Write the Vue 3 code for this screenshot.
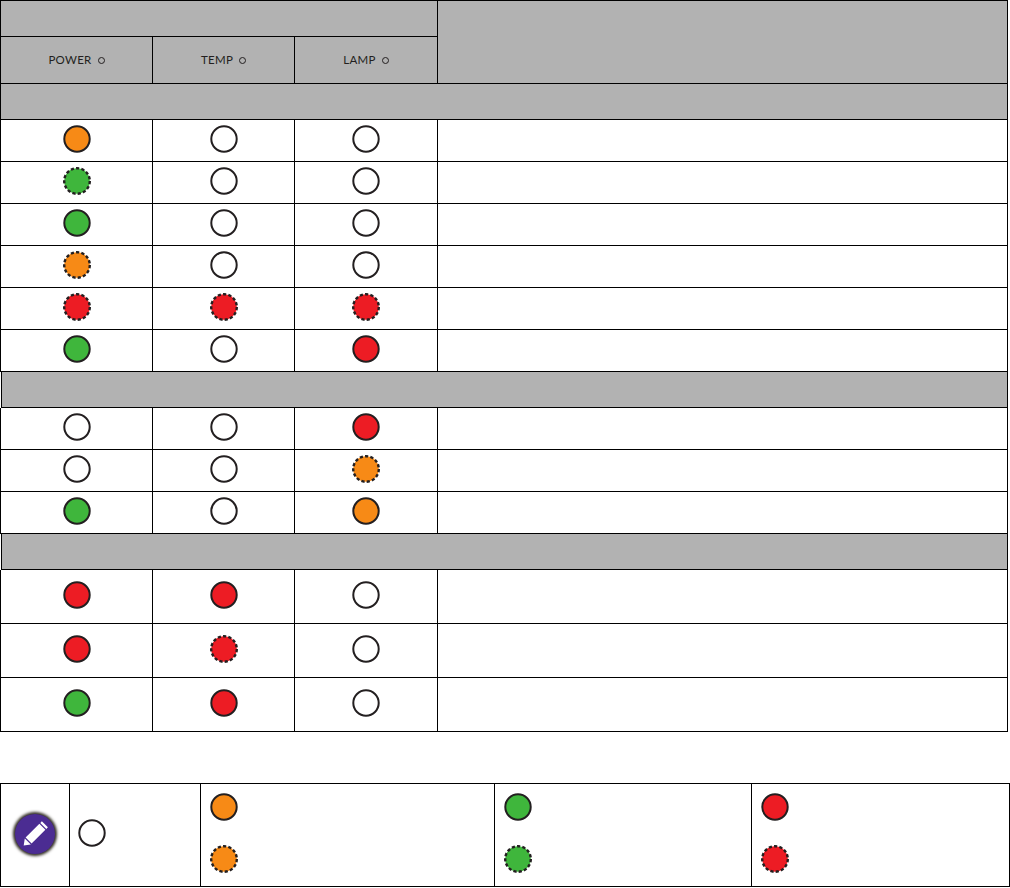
<script setup>
const O = 'o', G = 'g', R = 'r', N = 'n'
const groupA = [
  [[O], [N], [N]],
  [[G, 1], [N], [N]],
  [[G], [N], [N]],
  [[O, 1], [N], [N]],
  [[R, 1], [R, 1], [R, 1]],
  [[G], [N], [R]],
]
const groupB = [
  [[N], [N], [R]],
  [[N], [N], [O, 1]],
  [[G], [N], [O]],
]
const groupC = [
  [[R], [R], [N]],
  [[R], [R, 1], [N]],
  [[G], [R], [N]],
]
const sections = [
  { shift: false, rows: groupA, tall: false },
  { shift: true, rows: groupB, tall: false },
  { shift: true, rows: groupC, tall: true },
]
const heads = ['POWER', 'TEMP', 'LAMP']
const fills = { o: '#f78a16', g: '#3fb63c', r: '#ed1c24', n: '#ffffff' }
const legend = [
  [['o'], ['o', 1]],
  [['g'], ['g', 1]],
  [['r'], ['r', 1]],
]
</script>

<template>
  <div class="page">
    <div class="head">
      <div class="head-top"></div>
      <div class="head-desc"></div>
      <div v-for="h in heads" :key="h" class="head-cell">
        <span>{{ h }}</span><i class="dot"></i>
      </div>
    </div>

    <template v-for="(s, si) in sections" :key="si">
      <div class="section" :class="{ shift: s.shift }"></div>
      <div v-for="(row, ri) in s.rows" :key="ri" class="row" :class="{ tall: s.tall }">
        <div v-for="(led, ci) in row" :key="ci" class="cell">
          <svg class="led" width="28" height="28" viewBox="0 0 28 28">
            <template v-if="led[1]">
              <circle cx="14" cy="14" r="12.8" :fill="fills[led[0]]" />
              <circle cx="14" cy="14" r="12.8" fill="none" stroke="#231f20" stroke-width="2.4" stroke-dasharray="3.2 2.16" />
            </template>
            <circle v-else cx="14" cy="14" r="12.7" :fill="fills[led[0]]" stroke="#231f20" stroke-width="2" />
          </svg>
        </div>
        <div class="cell"></div>
      </div>
    </template>

    <div class="legend">
      <div class="lg-icon">
        <div class="badge">
          <svg class="pencil" width="24" height="24" viewBox="0 0 24 24">
            <path d="M24.9 5.3 18.9-0.7 17.3 0.9 23.3 6.9Z" fill="#fff" />
            <path d="M22.4 7.8 16.4 1.8 2.6 15.5 8.6 21.5Z" fill="#fff" />
            <path d="M7.8 22.4 1.8 16.4 0.7 23.5Z" fill="#fff" />
          </svg>
        </div>
      </div>
      <div class="lg-off">
        <svg width="28" height="28" viewBox="0 0 28 28">
          <circle cx="14" cy="14" r="12.7" fill="#fff" stroke="#231f20" stroke-width="2" />
        </svg>
      </div>
      <div v-for="(col, i) in legend" :key="i" class="lg-col">
        <svg v-for="(led, j) in col" :key="j" width="28" height="28" viewBox="0 0 28 28">
          <template v-if="led[1]">
            <circle cx="14" cy="14" r="12.8" :fill="fills[led[0]]" />
            <circle cx="14" cy="14" r="12.8" fill="none" stroke="#231f20" stroke-width="2.4" stroke-dasharray="3.2 2.16" />
          </template>
          <circle v-else cx="14" cy="14" r="12.7" :fill="fills[led[0]]" stroke="#231f20" stroke-width="2" />
        </svg>
      </div>
    </div>
  </div>
</template>

<style>
html, body { margin: 0; background: #fff; }
</style>

<style scoped>
.page {
  width: 1010px;
  height: 888px;
  overflow: hidden;
  background: #fff;
  font-family: Lato, "Liberation Sans", sans-serif;
  color: #231f20;
}
.head {
  width: 1008px;
  box-sizing: border-box;
  display: grid;
  grid-template-columns: 152px 142px 143px 570px;
  grid-template-rows: 36px 47px;
  border: 1px solid #000;
  border-width: 1px 0 1px 1px;
  background: #b2b2b2;
  height: 84px;
}
.head-top {
  grid-column: 1 / 4;
  border-right: 1px solid #000;
  border-bottom: 1px solid #000;
}
.head-desc {
  grid-column: 4;
  grid-row: 1 / 3;
  border-right: 1px solid #000;
}
.head-cell {
  display: flex;
  align-items: center;
  justify-content: center;
  gap: 6px;
  border-right: 1px solid #000;
  font-size: 11.5px;
  letter-spacing: 0.3px;
  line-height: 1;
  box-sizing: border-box;
}
.head-cell span { margin-bottom: 2px; }
.dot {
  width: 7px;
  height: 7px;
  box-sizing: border-box;
  border: 1px solid #231f20;
  border-radius: 50%;
}
.section {
  box-sizing: border-box;
  width: 1008px;
  height: 36px;
  background: #b2b2b2;
  border-left: 1px solid #000;
  border-right: 1px solid #000;
  border-bottom: 1px solid #000;
}
.section.shift {
  width: 1007px;
  margin-left: 1px;
}
.row {
  box-sizing: border-box;
  width: 1008px;
  height: 42px;
  display: grid;
  grid-template-columns: 152px 142px 143px 570px;
  border-left: 1px solid #000;
  border-bottom: 1px solid #000;
}
.row.tall { height: 54px; }
.cell {
  display: flex;
  align-items: center;
  justify-content: center;
  border-right: 1px solid #000;
  padding-bottom: 3px;
}
.led { display: block; }
.legend {
  margin-top: 51px;
  box-sizing: border-box;
  width: 1010px;
  height: 104px;
  display: grid;
  grid-template-columns: 69px 131px 294px 257px 258px;
  border: 1px solid #000;
  border-width: 1px 0 1px 1px;
}
.lg-icon, .lg-off, .lg-col {
  border-right: 1px solid #000;
  display: flex;
}
.lg-icon {
  align-items: center;
  justify-content: center;
  padding-bottom: 2px;
  padding-right: 1px;
}
.badge {
  width: 40px;
  height: 40px;
  border-radius: 50%;
  background: #4b2c92;
  box-shadow: 0 0 3px 2px #2e2a20;
  display: flex;
  align-items: center;
  justify-content: center;
}
.pencil { overflow: visible; }
.lg-off {
  align-items: center;
  padding-left: 8.3px;
  padding-bottom: 4px;
}
.lg-col {
  flex-direction: column;
  padding: 9.3px 0 0 9px;
  gap: 24px;
}
</style>
